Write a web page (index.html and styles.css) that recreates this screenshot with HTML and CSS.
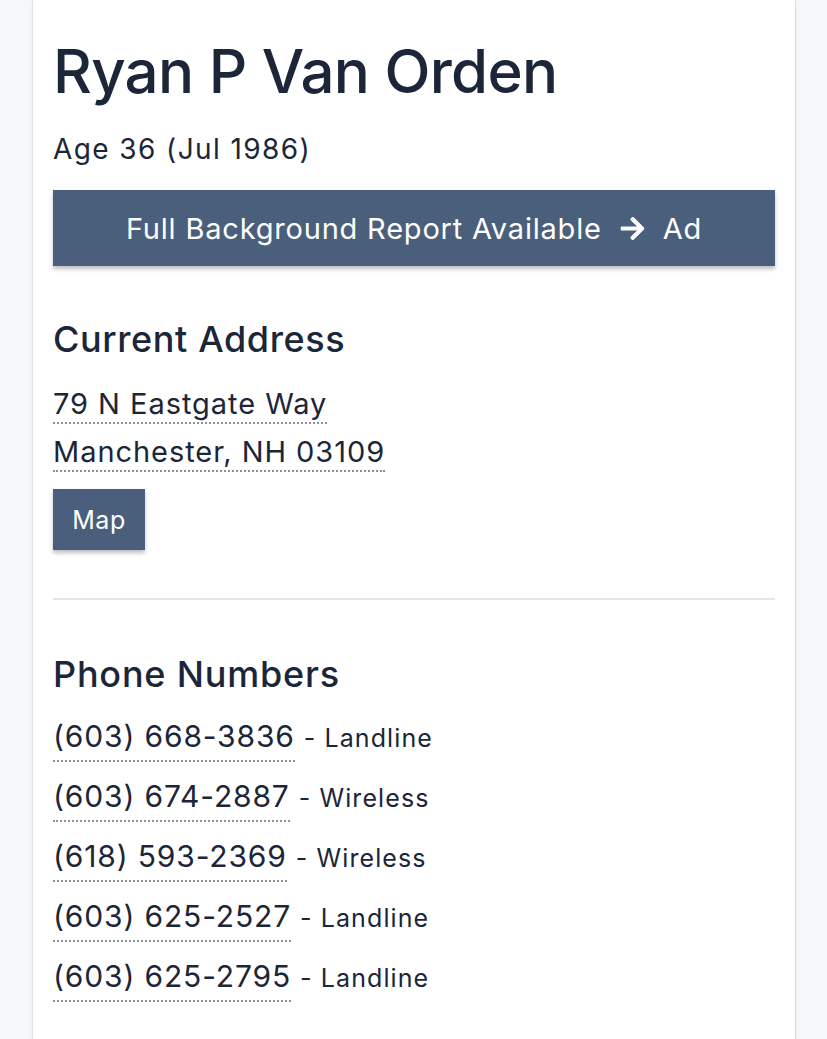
FILE: index.html
```html
<!DOCTYPE html>
<html>
<head>
<meta charset="utf-8">
<link rel="stylesheet" href="styles.css">
</head>
<body>
<div class="card">
  <h1 class="name">Ryan P Van Orden</h1>
  <p class="age">Age 36 (Jul 1986)</p>
  <a class="btn btn-wide" href="#">Full Background Report Available
    <svg class="arrow" viewBox="0 0 448 512"><path fill="#fff" d="M190.5 66.9l22.2-22.2c9.4-9.4 24.6-9.4 33.9 0L441 239c9.4 9.4 9.4 24.6 0 33.9L246.6 467.3c-9.4 9.4-24.6 9.4-33.9 0l-22.2-22.2c-9.5-9.5-9.3-25 .4-34.3L311.4 296H24c-13.3 0-24-10.7-24-24v-32c0-13.3 10.7-24 24-24h287.4L190.9 101.2c-9.8-9.3-10-24.8-.4-34.3z"/></svg>
    Ad</a>

  <h2 class="section-title">Current Address</h2>
  <div class="address">
    <a class="dotted" href="#">79 N Eastgate Way</a><br>
    <a class="dotted" href="#">Manchester, NH 03109</a>
  </div>
  <a class="btn btn-small" href="#">Map</a>

  <hr class="divider">

  <h2 class="section-title phones-title">Phone Numbers</h2>
  <ul class="phones">
    <li><a class="dotted" href="#">(603) 668-3836</a><span class="type">- Landline</span></li>
    <li><a class="dotted" href="#">(603) 674-2887</a><span class="type">- Wireless</span></li>
    <li><a class="dotted" href="#">(618) 593-2369</a><span class="type">- Wireless</span></li>
    <li><a class="dotted" href="#">(603) 625-2527</a><span class="type">- Landline</span></li>
    <li><a class="dotted" href="#">(603) 625-2795</a><span class="type">- Landline</span></li>
  </ul>
</div>
</body>
</html>
```

FILE: styles.css
```css
html, body {
  margin: 0;
  padding: 0;
}
body {
  background: #f6f8fc;
  font-family: Inter, "Noto Sans", sans-serif;
  color: #1b2638;
}
.card {
  margin-left: 32px;
  width: 722px;
  min-height: 1039px;
  padding: 35px 20px 0 20px;
  background: #fff;
  border-left: 1px solid #e3e4e7;
  border-right: 1px solid #dcdde0;
  box-shadow: 0 0 4px rgba(0,0,0,0.06);
  box-sizing: content-box;
}
.name {
  margin: 0;
  font-size: 60px;
  line-height: 72px;
  font-weight: 500;
  letter-spacing: -0.7px;
}
.age {
  margin: 24px 0 0;
  font-size: 28px;
  line-height: 36px;
  letter-spacing: 1.4px;
}
.btn {
  display: flex;
  align-items: center;
  justify-content: center;
  background: #4a5f7c;
  color: #fff;
  text-decoration: none;
  box-shadow: 0 3px 4px rgba(0,0,0,0.25);
}
.btn-wide {
  margin-top: 23px;
  height: 76px;
  font-size: 29px;
  letter-spacing: 0.8px;
  gap: 17px;
}
.arrow {
  width: 27px;
  height: 27px;
}
.btn-small {
  display: inline-flex;
  margin-top: 13px;
  width: 92px;
  height: 61px;
  font-size: 25px;
  letter-spacing: 0.5px;
}
.section-title {
  margin: 51px 0 0;
  font-size: 36px;
  line-height: 44px;
  font-weight: 500;
  letter-spacing: 0.6px;
}
.address {
  margin-top: 19px;
  font-size: 29px;
  line-height: 48px;
  letter-spacing: 0.95px;
}
.dotted {
  color: #1b2638;
  text-decoration: none;
  border-bottom: 2px dotted #8a929c;
  padding-bottom: 1px;
}
.divider {
  margin: 48px 0 0;
  border: 0;
  border-top: 2px solid #e4e5e7;
}
.phones-title {
  margin-top: 52px;
  letter-spacing: 0.8px;
}
.phones {
  list-style: none;
  margin: 16px 0 0;
  padding: 0;
}
.phones li {
  display: flex;
  align-items: baseline;
  height: 60px;
  font-size: 30px;
  line-height: 48px;
  letter-spacing: 0.85px;
}
.phones .dotted {
  padding-bottom: 0;
}
.phones .type {
  margin-left: 9px;
  font-size: 25px;
  letter-spacing: 1.1px;
}
```
